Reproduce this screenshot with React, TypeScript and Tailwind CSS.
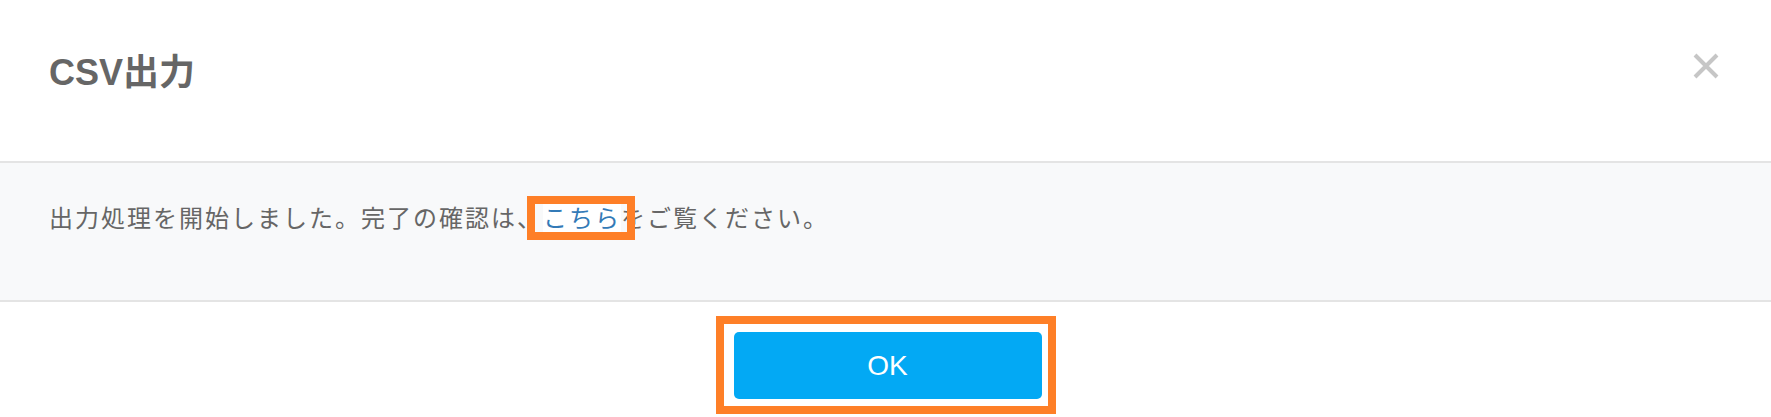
function CloseIcon() {
  return (
    <svg width="26" height="26" viewBox="0 0 26 26" className="text-[#c6c6c6]">
      <path
        d="M2 2 L24 24 M24 2 L2 24"
        stroke="currentColor"
        strokeWidth="4"
        strokeLinecap="butt"
      />
    </svg>
  );
}

function App() {
  return (
    <div
      className="w-[1771px] h-[417px] bg-white overflow-hidden"
      style={{ fontFamily: '"Liberation Sans", "Noto Sans CJK JP", sans-serif' }}
    >
      {/* header */}
      <div className="h-[161px] flex items-start justify-between pl-[49px] pr-[52px] pt-[46px]">
        <h2 className="text-[36px] leading-[54px] font-bold text-[#666666]">
          CSV出力
        </h2>
        <button className="mt-[7px]">
          <CloseIcon />
        </button>
      </div>

      {/* body */}
      <div className="h-[141px] border-y-2 border-[#e4e4e4] bg-[#f8f9fa] pl-[49px] pt-[36px]">
        <p
          className="text-[24px] leading-[36px] tracking-[2px] text-[#666666]"
          style={{ fontFamily: '"Noto Sans CJK JP", sans-serif' }}
        >
          出力処理を開始しました。完了の確認は、
          <span className="relative bg-white text-[#337ab7]">
            こちら
            <span className="pointer-events-none absolute -left-[16px] -right-[14px] -top-[3px] -bottom-[6px] border-[8px] border-[#fe7f27]" />
          </span>
          をご覧ください。
        </p>
      </div>

      {/* footer */}
      <div className="flex justify-center pt-[14px]">
        <div className="border-[8px] border-[#fe7f27] pl-[10px] pr-[6px] pt-[8px] pb-[7px]">
          <button className="w-[308px] h-[67px] rounded-[5px] bg-[#03a9f4] text-white text-[28px]">
            OK
          </button>
        </div>
      </div>
    </div>
  );
}

export default App;
